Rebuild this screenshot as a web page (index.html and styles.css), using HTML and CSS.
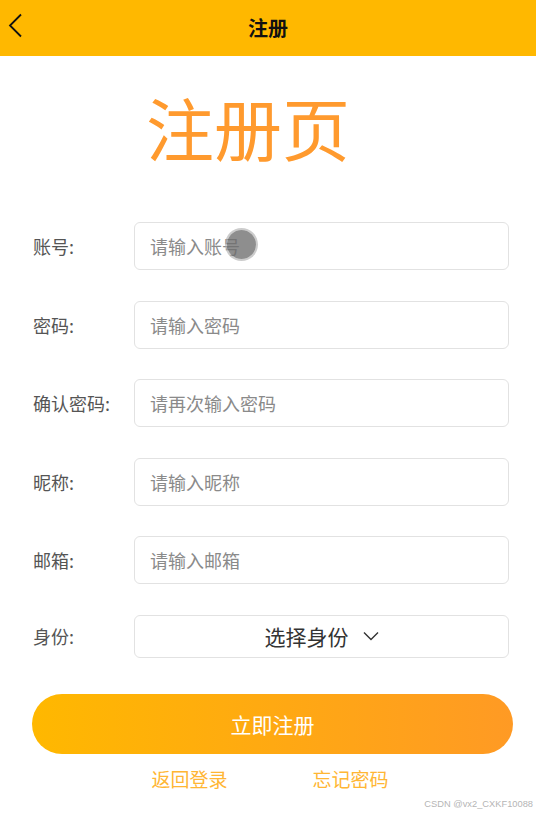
FILE: index.html
```html
<!DOCTYPE html>
<html lang="zh-CN">
<head>
<meta charset="utf-8">
<title>注册</title>
<link rel="stylesheet" href="styles.css">
</head>
<body>
<div class="page">
  <header class="topbar">
    <span class="back">
      <svg width="16" height="26" viewBox="0 0 16 26"><path d="M13 1.5 L2 12.5 L13 23.5" fill="none" stroke="#111" stroke-width="1.8"/></svg>
    </span>
    <h1 class="topbar-title">注册</h1>
  </header>

  <div class="hero">注册页</div>

  <form class="form">
    <div class="row">
      <label class="label">账号:</label>
      <input class="field" type="text" placeholder="请输入账号">
    </div>
    <div class="row">
      <label class="label">密码:</label>
      <input class="field" type="password" placeholder="请输入密码">
    </div>
    <div class="row">
      <label class="label">确认密码:</label>
      <input class="field" type="password" placeholder="请再次输入密码">
    </div>
    <div class="row">
      <label class="label">昵称:</label>
      <input class="field" type="text" placeholder="请输入昵称">
    </div>
    <div class="row">
      <label class="label">邮箱:</label>
      <input class="field" type="text" placeholder="请输入邮箱">
    </div>
    <div class="row">
      <label class="label">身份:</label>
      <div class="select">
        <span>选择身份</span>
        <svg width="16" height="10" viewBox="0 0 16 10"><path d="M1 1.5 L8 8.5 L15 1.5" fill="none" stroke="#333" stroke-width="1.4"/></svg>
      </div>
    </div>
  </form>

  <button class="submit" type="button">立即注册</button>

  <div class="links">
    <a class="link">返回登录</a>
    <a class="link">忘记密码</a>
  </div>

  <span class="touch"></span>
  <span class="watermark">CSDN @vx2_CXKF10088</span>
</div>
</body>
</html>
```

FILE: styles.css
```css
* { box-sizing: border-box; }
html, body { margin: 0; padding: 0; background: #fff; }
body {
  font-family: "Noto Sans CJK SC", "Microsoft YaHei", sans-serif;
  width: 536px;
  height: 815px;
  overflow: hidden;
}
.page { position: relative; height: 815px; }

.topbar {
  height: 56px;
  background: #ffb800;
  display: flex;
  align-items: center;
  justify-content: center;
  position: relative;
}
.back {
  position: absolute;
  left: 8px;
  top: 13px;
  display: block;
  line-height: 0;
}
.topbar-title {
  margin: 0;
  font-size: 20px;
  font-weight: 700;
  color: #111;
  line-height: 1;
}

.hero {
  margin-top: 37px;
  padding-left: 146px;
  font-size: 68px;
  line-height: 68px;
  color: #ff9a2e;
}

.form {
  margin-top: 61px;
  display: flex;
  flex-direction: column;
  gap: 30.6px;
  padding: 0 27px 0 33px;
}
.row {
  display: flex;
  align-items: center;
}
.label {
  width: 101px;
  flex: none;
  font-size: 18px;
  color: #555;
}
.field {
  flex: 1;
  height: 48px;
  border: 1px solid #e2e2e2;
  border-radius: 6px;
  padding: 0 15px;
  font-family: inherit;
  font-size: 18px;
  color: #333;
  outline: none;
  background: #fff;
}
.field::placeholder { color: #8a8a8a; }
.select {
  flex: 1;
  height: 43px;
  border: 1px solid #e2e2e2;
  border-radius: 6px;
  display: flex;
  align-items: center;
  justify-content: center;
  gap: 14px;
  font-size: 21px;
  color: #333;
}

.submit {
  display: block;
  margin: 36px 23px 0 32px;
  width: 481px;
  height: 60px;
  border: none;
  border-radius: 30px;
  background: linear-gradient(90deg, #ffb800 0%, #ff9a24 100%);
  color: #fff;
  font-family: inherit;
  font-size: 21px;
}

.links {
  margin-top: 12px;
  display: flex;
  justify-content: center;
  gap: 85px;
  padding-left: 4px;
}
.link {
  font-size: 19px;
  line-height: 26px;
  color: #ffb634;
}

.touch {
  position: absolute;
  left: 227px;
  top: 230px;
  width: 29px;
  height: 29px;
  border-radius: 50%;
  background: rgba(110, 110, 110, 0.78);
  box-shadow: 0 0 0 2px rgba(170, 170, 170, 0.6);
}
.watermark {
  position: absolute;
  right: 3px;
  bottom: 6px;
  font-family: "Liberation Sans", sans-serif;
  font-size: 9.3px;
  color: #b5b5b5;
}
```
